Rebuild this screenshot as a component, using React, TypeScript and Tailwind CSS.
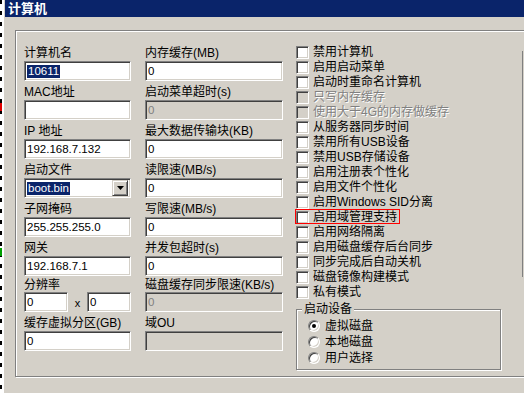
import clsx from "clsx";

const sunken =
  "border border-t-[#808080] border-l-[#808080] border-r-white border-b-white shadow-[inset_1px_1px_0_#404040,inset_-1px_-1px_0_#d4d0c8]";
const etched = "border border-[#808080] shadow-[inset_1px_1px_0_#fff,1px_1px_0_#fff]";

const OPTIONS: { label: string; disabled?: boolean; marked?: boolean }[] = [
  { label: "禁用计算机" },
  { label: "启用启动菜单" },
  { label: "启动时重命名计算机" },
  { label: "只写内存缓存", disabled: true },
  { label: "使用大于4G的内存做缓存", disabled: true },
  { label: "从服务器同步时间" },
  { label: "禁用所有USB设备" },
  { label: "禁用USB存储设备" },
  { label: "启用注册表个性化" },
  { label: "启用文件个性化" },
  { label: "启用Windows SID分离" },
  { label: "启用域管理支持", marked: true },
  { label: "启用网络隔离" },
  { label: "启用磁盘缓存后台同步" },
  { label: "同步完成后自动关机" },
  { label: "磁盘镜像构建模式" },
  { label: "私有模式" },
];

function Label({ text, short }: { text: string; short?: boolean }) {
  return (
    <div
      className={clsx(
        "text-[12px] whitespace-nowrap text-black",
        short ? "h-[13px] leading-[13px]" : "h-[16px] leading-[16px]",
      )}
    >
      {text}
    </div>
  );
}

function Input({
  value,
  disabled,
  selected,
  className,
}: {
  value?: string;
  disabled?: boolean;
  selected?: boolean;
  className?: string;
}) {
  return (
    <div
      className={clsx(
        "h-[20px] flex items-center pl-[2px] text-[11.5px] leading-[13px] whitespace-nowrap",
        sunken,
        disabled ? "bg-[#d4d0c8] text-[#808080]" : "bg-white text-black",
        className,
      )}
    >
      {selected ? (
        <span className="bg-[#0a246a] text-white pl-[1px] pr-[1px]">{value}</span>
      ) : (
        value
      )}
    </div>
  );
}

function Field({
  label,
  value,
  disabled,
  selected,
  short,
}: {
  label: string;
  value?: string;
  disabled?: boolean;
  selected?: boolean;
  short?: boolean;
}) {
  return (
    <div className="flex flex-col mb-[3px]">
      <Label text={label} short={short} />
      <Input value={value} disabled={disabled} selected={selected} />
    </div>
  );
}

function Checkbox({ disabled }: { disabled?: boolean }) {
  return (
    <div
      className={clsx(
        "w-[13px] h-[13px] shrink-0",
        sunken,
        disabled ? "bg-[#d4d0c8]" : "bg-white",
      )}
    />
  );
}

function Radio({ label, checked }: { label: string; checked?: boolean }) {
  return (
    <div className="h-[16px] flex items-center">
      <div className="w-[12px] h-[12px] rounded-full border border-t-[#808080] border-l-[#808080] border-r-white border-b-white bg-white shadow-[inset_1px_1px_0_#404040,inset_-1px_-1px_0_#d4d0c8] flex items-center justify-center">
        {checked && <div className="w-[4px] h-[4px] rounded-full bg-black" />}
      </div>
      <span className="ml-[5px] text-[12px] leading-[13px]">{label}</span>
    </div>
  );
}

export default function App() {
  return (
    <div className="w-[524px] h-[393px] overflow-hidden flex bg-[#d4d0c8] text-black font-['Liberation_Sans','Noto_Sans_CJK_SC',sans-serif]">
      {/* window behind, left edge */}
      <div className="w-[4px] flex shrink-0 bg-white relative">
        <div className="w-[2px] h-full bg-[repeating-linear-gradient(to_bottom,#000_0_4px,#fff_4px_11px)]" />
        <div className="absolute left-0 top-[103px] w-[2px] h-[8px] bg-[#e00000]" />
        <div className="absolute left-0 top-[248px] w-[2px] h-[8px] bg-[#00a000]" />
      </div>

      <div className="flex-1 flex flex-col min-w-0">
        <div className="h-[17px] ml-[1px] bg-[#0a246a] text-white font-bold text-[13px] leading-[17px] pl-[3px] shrink-0">
          计算机
        </div>

        <div className="flex-1 pl-[11px] pt-[13px]">
          <div className={clsx("w-[540px] h-[347px] flex pl-[8px] pt-[14px]", etched)}>
            {/* column 1 */}
            <div className="w-[107px] flex flex-col shrink-0">
              <Field label="计算机名" value="10611" selected />
              <Field label="MAC地址" />
              <Field label="IP 地址" value="192.168.7.132" />
              <div className="flex flex-col mb-[3px]">
                <Label text="启动文件" />
                <div className={clsx("h-[20px] bg-white flex items-center pl-[2px] pr-[2px]", sunken)}>
                  <span className="bg-[#0a246a] text-white text-[11.5px] leading-[13px] pl-[1px] pr-[1px]">
                    boot.bin
                  </span>
                  <div className="ml-auto w-[16px] h-[16px] bg-[#d4d0c8] border border-t-[#d4d0c8] border-l-[#d4d0c8] border-r-[#404040] border-b-[#404040] shadow-[inset_1px_1px_0_#fff,inset_-1px_-1px_0_#808080] flex items-center justify-center">
                    <svg width="7" height="4" viewBox="0 0 7 4">
                      <path d="M0 0h7L3.5 4z" fill="#000" />
                    </svg>
                  </div>
                </div>
              </div>
              <Field label="子网掩码" value="255.255.255.0" />
              <Field label="网关" value="192.168.7.1" />
              <div className="flex flex-col mb-[3px]">
                <Label text="分辨率" short />
                <div className="flex items-center">
                  <Input value="0" className="w-[44px]" />
                  <span className="flex-1 text-center text-[11px] leading-[13px] pt-[3px]">x</span>
                  <Input value="0" className="w-[44px]" />
                </div>
              </div>
              <Field label="缓存虚拟分区(GB)" value="0" />
            </div>

            {/* column 2 */}
            <div className="w-[138px] ml-[14px] flex flex-col shrink-0">
              <Field label="内存缓存(MB)" value="0" />
              <Field label="启动菜单超时(s)" value="0" disabled />
              <Field label="最大数据传输块(KB)" value="0" />
              <Field label="读限速(MB/s)" value="0" />
              <Field label="写限速(MB/s)" value="0" />
              <Field label="并发包超时(s)" value="0" />
              <Field label="磁盘缓存同步限速(KB/s)" value="0" disabled short />
              <Field label="域OU" disabled />
            </div>

            {/* column 3 */}
            <div className="w-[205px] ml-[13px] flex flex-col shrink-0">
              {OPTIONS.map((o) => (
                <div key={o.label} className="h-[15px] flex items-center relative">
                  <Checkbox disabled={o.disabled} />
                  <span
                    className={clsx(
                      "ml-[4px] text-[12px] leading-[13px] whitespace-nowrap",
                      o.disabled && "text-[#808080] [text-shadow:1px_1px_0_#fff]",
                    )}
                  >
                    {o.label}
                  </span>
                  {o.marked && (
                    <div className="absolute left-[-1px] top-[-1px] w-[105px] h-[15px] border border-[#ff0000]" />
                  )}
                </div>
              ))}

              <div className={clsx("relative mt-[9px] h-[61px] pl-[11px] pt-[8px]", etched)}>
                <span className="absolute top-[-8px] left-[5px] bg-[#d4d0c8] px-[2px] text-[12px] leading-[14px]">
                  启动设备
                </span>
                <Radio label="虚拟磁盘" checked />
                <Radio label="本地磁盘" />
                <Radio label="用户选择" />
              </div>
            </div>

            <div className="ml-[21px] mt-[6px] w-[1px] h-[226px] bg-[#808080] shrink-0" />
          </div>
        </div>
      </div>
    </div>
  );
}
